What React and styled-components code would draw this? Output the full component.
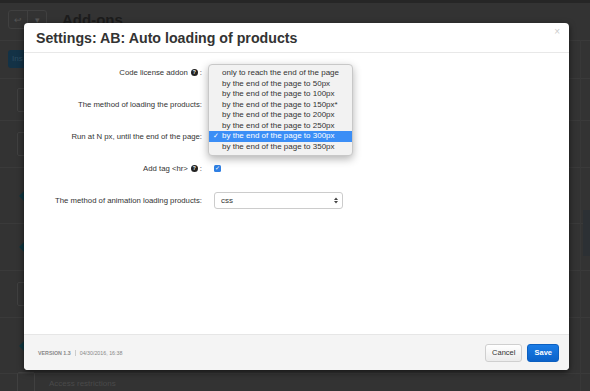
import React from 'react'
import styled, { createGlobalStyle } from 'styled-components'

const GlobalStyle = createGlobalStyle`
  html, body {
    margin: 0;
    padding: 0;
    background: #333;
    font-family: "Liberation Sans", Arial, sans-serif;
  }
`

const Page = styled.div`
  position: relative;
  width: 590px;
  height: 391px;
  overflow: hidden;
  background: #333;
  border-top: 3px solid #262626;
  box-sizing: border-box;
`

const PageHeader = styled.div`
  display: flex;
  align-items: center;
  gap: 15px;
  height: 37px;
  padding: 0 8px;
  border-bottom: 1px solid #3a3a3a;
`

const BtnGroup = styled.div`
  display: flex;
  height: 17px;
  border: 1px solid #404040;
  border-radius: 3px;
  margin-top: -4px;
  span {
    width: 18px;
    color: #555;
    font-size: 9px;
    display: flex;
    align-items: center;
    justify-content: center;
  }
  span + span {
    border-left: 1px solid #404040;
  }
`

const PageTitle = styled.h2`
  margin: -5px 0 0;
  font-size: 15px;
  color: #1c1c1c;
`

const InstallBtn = styled.div`
  margin: 9px 0 10px 8px;
  width: 40px;
  height: 18px;
  border-radius: 3px;
  background: #133246;
  color: #2e4d60;
  font-size: 8px;
  padding-left: 4px;
  line-height: 18px;
`

const ListRow = styled.div`
  box-sizing: border-box;
  height: ${p => p.h}px;
  border-top: 1px solid #3a3a3a;
  display: flex;
  align-items: center;
  padding-left: 17px;
  gap: 14px;
  color: #4a4a4a;
  font-size: 8px;
`

const RowBox = styled.div`
  width: 16px;
  height: 22px;
  border: 1px solid #404040;
  border-radius: 2px;
`

const RowDiamond = styled.div`
  width: 14px;
  height: 14px;
  margin-left: 5px;
  background: #0f3741;
  transform: rotate(45deg);
`

const SideColumn = styled.div`
  position: absolute;
  right: 0;
  top: 37px;
  bottom: 0;
  width: 9px;
  border-left: 1px solid #383838;
  &::after {
    content: '';
    position: absolute;
    top: 170px;
    left: 2px;
    width: 8px;
    height: 46px;
    background: #2c3034;
  }
`

const Modal = styled.div`
  position: absolute;
  left: 24px;
  top: 20px;
  width: 545px;
  height: 347px;
  background: #fff;
  border-radius: 4px;
  box-shadow: 0 2px 6px rgba(0, 0, 0, 0.6);
  display: flex;
  flex-direction: column;
`

const ModalHeader = styled.div`
  height: 29px;
  padding: 0 12px;
  display: flex;
  align-items: center;
  justify-content: space-between;
  border-bottom: 1px solid #e8e8e8;
  h3 {
    margin: 0;
    font-size: 14.2px;
    font-weight: bold;
    color: #333;
  }
`

const Close = styled.span`
  color: #ccc;
  font-size: 10px;
  margin-top: -12px;
  margin-right: -3px;
`

const Body = styled.div`
  flex: 1;
  padding-top: 10px;
  display: flex;
  flex-direction: column;
  gap: 14px;
`

const FormRow = styled.div`
  display: grid;
  grid-template-columns: 178px 1fr;
  column-gap: 12px;
  align-items: center;
  height: 18px;
`

const Label = styled.label`
  text-align: right;
  font-size: 7.75px;
  color: #333;
  white-space: nowrap;
  display: flex;
  align-items: center;
  justify-content: flex-end;
  gap: 1px;
`

const Help = styled.span`
  display: inline-flex;
  align-items: center;
  justify-content: center;
  width: 7px;
  height: 7px;
  border-radius: 50%;
  background: #222;
  color: #fff;
  font-size: 5px;
  font-weight: bold;
  margin: 0 1px 0 2px;
`

const Control = styled.div`
  position: relative;
  display: flex;
  align-items: center;
`

const Select = styled.div`
  width: 129px;
  height: 17px;
  box-sizing: border-box;
  border: 1px solid #ccc;
  border-radius: 3px;
  display: flex;
  align-items: center;
  justify-content: space-between;
  padding: 0 4px 0 6px;
  font-size: 8px;
  color: #333;
  background: #fff;
`

const Checkbox = styled.span`
  width: 7px;
  height: 7px;
  border-radius: 1.5px;
  background: #2f7fe3;
  color: #fff;
  font-size: 6px;
  line-height: 7px;
  text-align: center;
`

const Menu = styled.ul`
  position: absolute;
  left: -6px;
  top: -72px;
  width: 143px;
  margin: 0;
  padding: 3px 0;
  list-style: none;
  background: #f2f2f2;
  border: 1px solid #c8c8c8;
  border-radius: 4px;
  box-shadow: 0 3px 8px rgba(0, 0, 0, 0.3);
  z-index: 2;
`

const MenuItem = styled.li`
  position: relative;
  height: 10.5px;
  line-height: 10.5px;
  padding-left: 13px;
  font-size: 8px;
  white-space: nowrap;
  color: ${p => (p.selected ? '#fff' : '#333')};
  background: ${p => (p.selected ? '#3b8ef6' : 'transparent')};
  &::before {
    content: ${p => (p.selected ? "'✓'" : "''")};
    position: absolute;
    left: 4px;
    font-size: 7px;
  }
`

const Footer = styled.div`
  height: 35px;
  background: #f4f4f4;
  border-top: 1px solid #e6e6e6;
  border-radius: 0 0 4px 4px;
  display: flex;
  align-items: center;
  justify-content: space-between;
  padding: 0 10px 0 14px;
`

const Meta = styled.div`
  font-size: 5.3px;
  font-weight: bold;
  color: #888;
  display: flex;
  gap: 4px;
  span + span {
    border-left: 1px solid #ccc;
    padding-left: 4px;
    font-weight: normal;
  }
`

const Buttons = styled.div`
  display: flex;
  gap: 5px;
`

const Button = styled.button`
  height: 18px;
  padding: 0 6px;
  font-family: inherit;
  font-size: 7.5px;
  border-radius: 3px;
  border: 1px solid ${p => (p.primary ? '#0b5fc0' : '#cfcfcf')};
  background: ${p => (p.primary ? 'linear-gradient(#1a7ce6, #0b62c9)' : 'linear-gradient(#fff, #ececec)')};
  color: ${p => (p.primary ? '#fff' : '#333')};
  font-weight: ${p => (p.primary ? 'bold' : 'normal')};
`

const SelectArrows = () => (
  <svg width="4" height="7" viewBox="0 0 4 7">
    <path d="M0 3 L2 0.5 L4 3 Z M0 4 L2 6.5 L4 4 Z" fill="#444" />
  </svg>
)

const options = [
  'only to reach the end of the page',
  'by the end of the page to 50px',
  'by the end of the page to 100px',
  'by the end of the page to 150px*',
  'by the end of the page to 200px',
  'by the end of the page to 250px',
  'by the end of the page to 300px',
  'by the end of the page to 350px',
]

const rows = [
  { h: 42, kind: 'box' },
  { h: 47, kind: 'box' },
  { h: 56, kind: 'diamond' },
  { h: 47, kind: 'diamond' },
  { h: 47, kind: 'box' },
  { h: 56, kind: 'diamond' },
  { h: 20, kind: 'box', text: 'Access restrictions' },
]

const App = () => (
  <>
    <GlobalStyle />
    <Page>
      <PageHeader>
        <BtnGroup>
          <span>↩</span>
          <span>▾</span>
        </BtnGroup>
        <PageTitle>Add-ons</PageTitle>
      </PageHeader>
      <InstallBtn>Ins</InstallBtn>
      {rows.map((r, i) => (
        <ListRow key={i} h={r.h}>
          {r.kind === 'box' ? <RowBox /> : <RowDiamond />}
          {r.text}
        </ListRow>
      ))}
      <SideColumn />

      <Modal>
        <ModalHeader>
          <h3>Settings: AB: Auto loading of products</h3>
          <Close>×</Close>
        </ModalHeader>
        <Body>
          <FormRow>
            <Label>
              Code license addon <Help>?</Help>:
            </Label>
            <Control />
          </FormRow>
          <FormRow>
            <Label>The method of loading the products:</Label>
            <Control />
          </FormRow>
          <FormRow>
            <Label>Run at N px, until the end of the page:</Label>
            <Control>
              <Menu>
                {options.map((o, i) => (
                  <MenuItem key={o} selected={i === 6}>
                    {o}
                  </MenuItem>
                ))}
              </Menu>
            </Control>
          </FormRow>
          <FormRow>
            <Label>
              Add tag &lt;hr&gt; <Help>?</Help>:
            </Label>
            <Control>
              <Checkbox>✓</Checkbox>
            </Control>
          </FormRow>
          <FormRow>
            <Label>The method of animation loading products:</Label>
            <Control>
              <Select>
                css
                <SelectArrows />
              </Select>
            </Control>
          </FormRow>
        </Body>
        <Footer>
          <Meta>
            <span>VERSION 1.3</span>
            <span>04/30/2016, 16:38</span>
          </Meta>
          <Buttons>
            <Button>Cancel</Button>
            <Button primary>Save</Button>
          </Buttons>
        </Footer>
      </Modal>
    </Page>
  </>
)

export default App
